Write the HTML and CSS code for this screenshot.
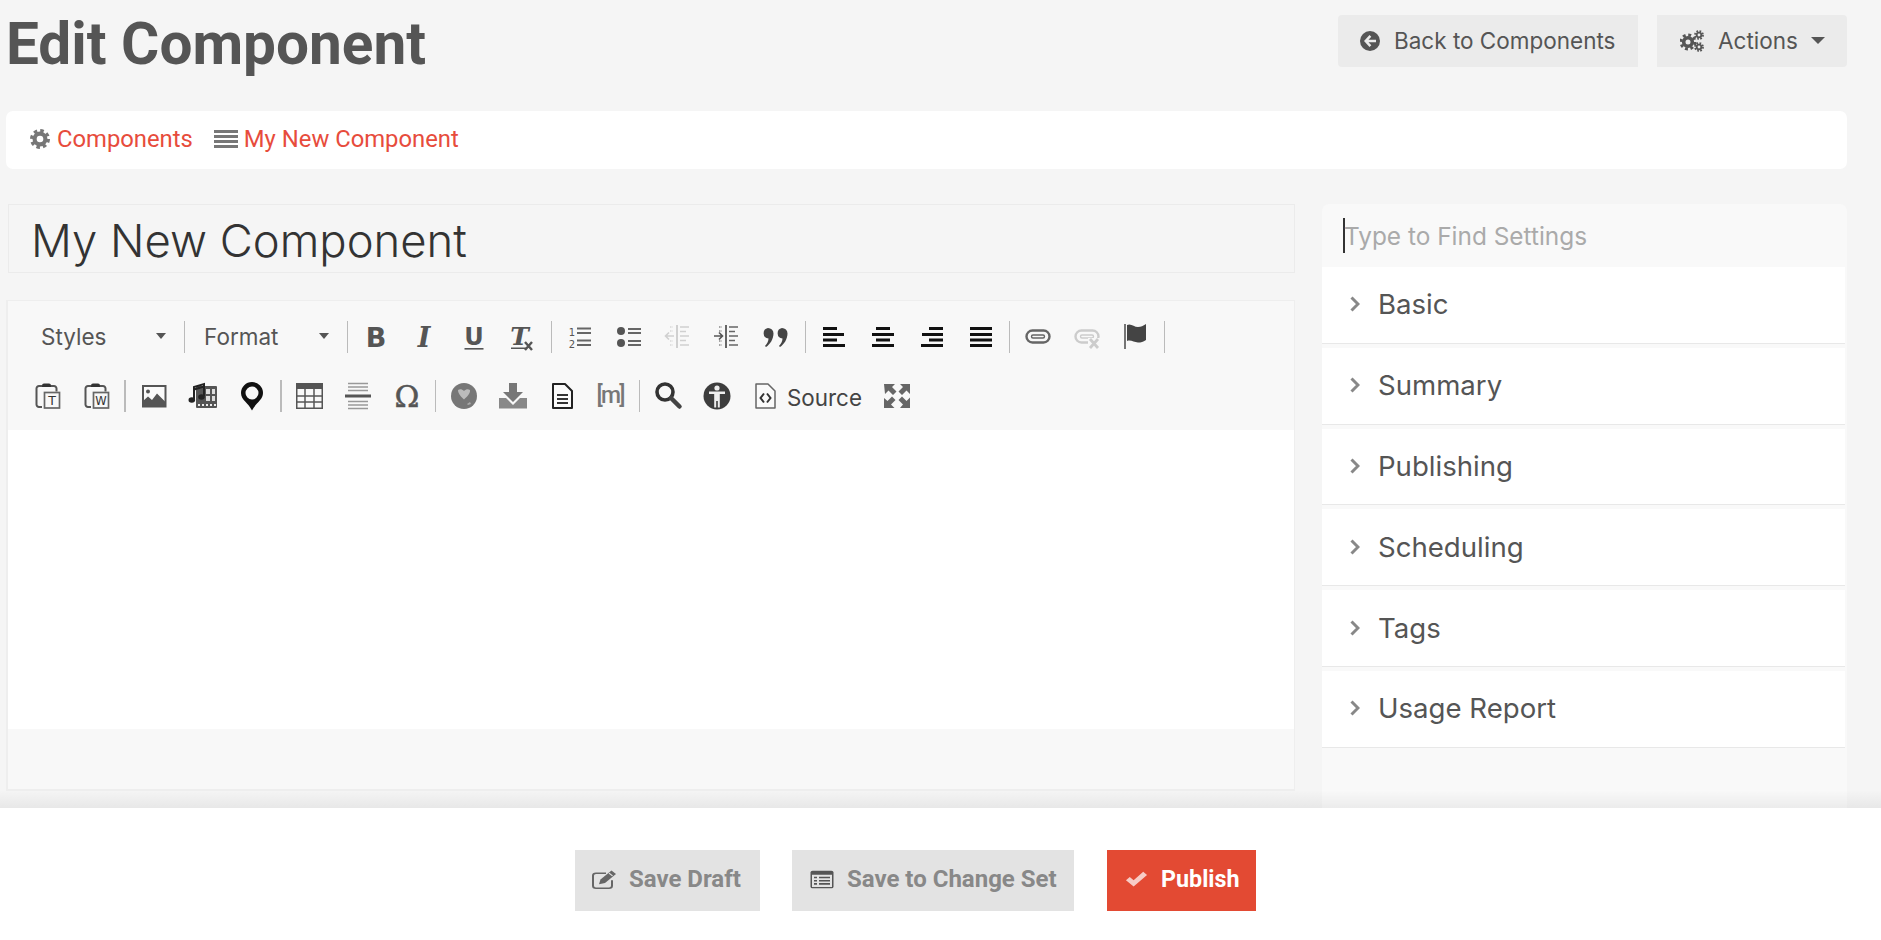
FILE: index.html
```html
<!DOCTYPE html>
<html lang="en">
<head>
<meta charset="utf-8">
<title>Edit Component</title>
<link rel="stylesheet" href="styles.css">
</head>
<body>
<svg class="sprite" xmlns="http://www.w3.org/2000/svg">
  <symbol id="i-gear" viewBox="0 0 24 24"><circle cx="12" cy="12" r="6.5" fill="none" stroke="currentColor" stroke-width="5"/><circle cx="12" cy="12" r="10" fill="none" stroke="currentColor" stroke-width="4" stroke-dasharray="4.2 3.65"/></symbol>
  <symbol id="i-list" viewBox="0 0 24 20"><path d="M0 1h24v3H0zM0 6h24v3H0zM0 11h24v3H0zM0 16h24v3H0z" fill="currentColor"/></symbol>
  <symbol id="i-back" viewBox="0 0 20 20"><circle cx="10" cy="10" r="10" fill="currentColor"/><path d="M9.5 4 4 10l5.500 6 1.800-1.800L8.500 11.300H16V8.700H8.500l2.800-2.900z" fill="#ebebeb"/></symbol>
  <symbol id="i-gears" viewBox="0 0 24 22"><circle cx="8" cy="12" r="4.300" fill="none" stroke="currentColor" stroke-width="3.600"/><circle cx="8" cy="12" r="7" fill="none" stroke="currentColor" stroke-width="3" stroke-dasharray="2.900 2.600"/><circle cx="19" cy="5" r="2.300" fill="none" stroke="currentColor" stroke-width="1.800"/><circle cx="19" cy="5" r="4" fill="none" stroke="currentColor" stroke-width="1.800" stroke-dasharray="1.700 1.450"/><circle cx="19" cy="17" r="2.300" fill="none" stroke="currentColor" stroke-width="1.800"/><circle cx="19" cy="17" r="4" fill="none" stroke="currentColor" stroke-width="1.800" stroke-dasharray="1.700 1.450"/></symbol>
  <symbol id="i-edit" viewBox="0 0 24 24" preserveAspectRatio="none"><path d="M14 4H4a3 3 0 0 0-3 3v13a3 3 0 0 0 3 3h13a3 3 0 0 0 3-3v-7" fill="none" stroke="#666" stroke-width="2"/><path d="M19.500 0.500 24 5 13 16.500 7 18l1.500-6z" fill="#666"/><path d="M17 4l3.500 3.500" stroke="#e3e3e3" stroke-width="1.200"/></symbol>
  <symbol id="i-window" viewBox="0 0 24 24" preserveAspectRatio="none"><rect x="0.500" y="1" width="23" height="22" rx="2" fill="#555"/><rect x="2" y="6" width="20" height="15.500" fill="#e3e3e3"/><path d="M4 8.500h3v2H4zM9 8.500h11v2H9zM4 12.500h3v2H4zM9 12.500h11v2H9zM4 16.500h3v2H4zM9 16.500h11v2H9z" fill="#555"/></symbol>
  <symbol id="i-check" viewBox="0 0 24 20" preserveAspectRatio="none"><path d="M9 19.500 1 11.500l4-4L9 11.500 19 1l4 4z" fill="#fff" fill-opacity=".72"/></symbol>

  <symbol id="t-bold" viewBox="0 0 30 30"><text class="g-sans-b" x="15" y="25" font-size="27" text-anchor="middle" fill="#555">B</text></symbol>
  <symbol id="t-italic" viewBox="0 0 30 30"><text class="g-serif-bi" x="14" y="25" font-size="27" text-anchor="middle" fill="#555">I</text></symbol>
  <symbol id="t-under" viewBox="0 0 30 30"><text class="g-sans-b" x="15" y="23" font-size="24" text-anchor="middle" fill="#555">U</text><rect x="5.500" y="26" width="19" height="1.600" fill="#555"/></symbol>
  <symbol id="t-clear" viewBox="0 0 30 30"><text class="g-serif-bi" x="11.500" y="23" font-size="25" text-anchor="middle" fill="#555">T</text><rect x="3" y="25.500" width="15" height="1.500" fill="#555"/><path d="M17 20l7 8M24 20l-7 8" stroke="#555" stroke-width="2.400"/></symbol>
  <symbol id="t-ol" viewBox="0 0 30 30"><text class="g-sans" x="7" y="14" font-size="10" text-anchor="middle" fill="#555">1</text><text class="g-sans" x="7" y="26" font-size="10" text-anchor="middle" fill="#555">2</text><path d="M12 6.500h14M12 11h14M12 18.500h14M12 23h14" stroke="#666" stroke-width="2"/></symbol>
  <symbol id="t-ul" viewBox="0 0 30 30"><circle cx="7" cy="9" r="4" fill="#555"/><circle cx="7" cy="21" r="4" fill="#555"/><path d="M14 7h13M14 11h13M14 19h13M14 23h13" stroke="#666" stroke-width="2"/></symbol>
  <symbol id="t-out" viewBox="0 0 30 30"><path d="M14 3v23" stroke="#d0d0d0" stroke-width="2"/><path d="M3 14h8M6 10.500 2.500 14 6 17.500" fill="none" stroke="#d0d0d0" stroke-width="1.600"/><path d="M7 5h3M7 9h3M7 19h3M7 23h3" stroke="#d8d8d8" stroke-width="1.500" stroke-dasharray="1.500 1"/><path d="M17 5h9M17 9.500h6M17 14h9M17 18.500h6M17 23h9" stroke="#d0d0d0" stroke-width="1.600"/></symbol>
  <symbol id="t-in" viewBox="0 0 30 30"><path d="M14 3v23" stroke="#666" stroke-width="2"/><path d="M2 14h8M7 10.500 10.500 14 7 17.500" fill="none" stroke="#555" stroke-width="1.600"/><path d="M7 5h3M7 9h3M7 19h3M7 23h3" stroke="#888" stroke-width="1.500" stroke-dasharray="1.500 1"/><path d="M17 5h9M17 9.500h6M17 14h9M17 18.500h6M17 23h9" stroke="#666" stroke-width="1.600"/></symbol>
  <symbol id="t-quote" viewBox="0 0 30 30"><path d="M7 6a5.500 5.500 0 0 1 5.500 5.500C12.500 17 9 22.500 5 25l-1-1c2-2 3.500-5 3.500-7.500A5.300 5.300 0 0 1 7 6zM21 6a5.500 5.500 0 0 1 5.500 5.500c0 5.500-3.500 11-7.500 13.500l-1-1c2-2 3.500-5 3.500-7.500A5.300 5.300 0 0 1 21 6z" fill="#444"/></symbol>
  <symbol id="t-al" viewBox="0 0 30 30"><path d="M4 5h14v3H4zM4 11h21v3H4zM4 16.500h14v3H4zM4 22h22v3H4z" fill="#111"/></symbol>
  <symbol id="t-ac" viewBox="0 0 30 30"><path d="M8 5h14v3H8zM4 11h22v3H4zM8 16.500h14v3H8zM4 22h22v3H4z" fill="#111"/></symbol>
  <symbol id="t-ar" viewBox="0 0 30 30"><path d="M12 5h14v3H12zM5 11h21v3H5zM12 16.500h14v3H12zM4 22h22v3H4z" fill="#111"/></symbol>
  <symbol id="t-aj" viewBox="0 0 30 30"><path d="M4 5h22v3H4zM4 11h22v3H4zM4 16.500h22v3H4zM4 22h22v3H4z" fill="#111"/></symbol>
  <symbol id="t-link" viewBox="0 0 30 30"><rect x="3.500" y="8.500" width="23" height="12" rx="6" fill="none" stroke="#666" stroke-width="2.400"/><rect x="8.500" y="13" width="13" height="3" rx="1.500" fill="none" stroke="#666" stroke-width="1.400"/></symbol>
  <symbol id="t-unlink" viewBox="0 0 30 30"><rect x="3.500" y="8.500" width="23" height="12" rx="6" fill="none" stroke="#ccc" stroke-width="2.400"/><rect x="8.500" y="13" width="13" height="3" rx="1.500" fill="none" stroke="#ccc" stroke-width="1.400"/><rect x="16" y="16" width="12" height="12" fill="#f8f8f8"/><path d="M18 17l8 9M26 17l-8 9" stroke="#ccc" stroke-width="2.800"/></symbol>
  <symbol id="t-flag" viewBox="0 0 30 30"><path d="M4 2v25" stroke="#666" stroke-width="1.800"/><path d="M6 3c4-2 7 2 11 2 3 0 5-1 8-3v16c-3 2-5 2.500-8 2.500-4 0-7-3-11-1.500z" fill="#444"/></symbol>

  <symbol id="t-pt" viewBox="0 0 30 30"><path d="M9 5H6a2.500 2.500 0 0 0-2.500 2.500v16A2.500 2.500 0 0 0 6 26h3M18 5h3a2.500 2.500 0 0 1 2.500 2.500v3" fill="none" stroke="#555" stroke-width="2"/><path d="M9 6h9V4.500a2 2 0 0 0-2-2h-5a2 2 0 0 0-2 2z" fill="#333"/><rect x="11.500" y="11.500" width="15" height="15.500" fill="#f8f8f8" stroke="#666" stroke-width="1.700"/><text class="g-sans" x="19" y="24" font-size="12.500" text-anchor="middle" fill="#333">T</text></symbol>
  <symbol id="t-pw" viewBox="0 0 30 30"><path d="M9 5H6a2.500 2.500 0 0 0-2.500 2.500v16A2.500 2.500 0 0 0 6 26h3M18 5h3a2.500 2.500 0 0 1 2.500 2.500v3" fill="none" stroke="#555" stroke-width="2"/><path d="M9 6h9V4.500a2 2 0 0 0-2-2h-5a2 2 0 0 0-2 2z" fill="#333"/><rect x="11.500" y="11.500" width="15" height="15.500" fill="#f8f8f8" stroke="#666" stroke-width="1.700"/><text class="g-sans" x="19" y="23.500" font-size="11.500" text-anchor="middle" fill="#333">W</text></symbol>
  <symbol id="t-img" viewBox="0 0 30 30"><rect x="4" y="5" width="22.500" height="20.500" fill="#fafafa" stroke="#555" stroke-width="2"/><circle cx="9" cy="10.500" r="2" fill="#555"/><path d="M4 25.500V20l5-4.500 4 3.500 5-6.500 8.500 8.500v4.500z" fill="#555"/></symbol>
  <symbol id="t-media" viewBox="0 0 30 30"><rect x="8" y="5" width="21" height="22" rx="1" fill="#555"/><path d="M18 8h4v5h-4zM24 8h3v5h-3zM24 15h3v5h-3zM18 15h4v5h-4z" fill="#ddd"/><path d="M10 24h2M14 24h2M18 24h2M22 24h2M26 24h2" stroke="#eee" stroke-width="2"/><path d="M6 18V6l10-3v12" fill="none" stroke="#222" stroke-width="2"/><path d="M6 8.500l10-3" stroke="#222" stroke-width="2"/><ellipse cx="3.800" cy="19" rx="3.300" ry="2.800" fill="#222"/><ellipse cx="13.500" cy="16" rx="3.300" ry="2.800" fill="#222"/></symbol>
  <symbol id="t-pin" viewBox="0 0 30 30"><path fill-rule="evenodd" d="M15 1a11 11 0 0 0-11 11c0 7 7.500 10 11 17.500C18.500 22 26 19 26 12A11 11 0 0 0 15 1zm0 4.500a6.500 6.500 0 1 1 0 13 6.500 6.500 0 0 1 0-13z" fill="#111"/></symbol>
  <symbol id="t-table" viewBox="0 0 30 30"><rect x="2" y="2" width="27" height="6" fill="#555"/><rect x="2.750" y="2.750" width="25.500" height="24.500" fill="none" stroke="#555" stroke-width="1.500"/><path d="M2 15h27M2 21h27M11 8v19M20 8v19" stroke="#555" stroke-width="1.500"/></symbol>
  <symbol id="t-hr" viewBox="0 0 30 30"><path d="M5 2.500h20M5 6h20M5 9.500h20M5 20.500h20M5 24h20M5 27.500h20" stroke="#999" stroke-width="1.300"/><rect x="2" y="13.500" width="26" height="3" fill="#555"/></symbol>
  <symbol id="t-omega" viewBox="0 0 30 30"><text class="g-serif" x="15" y="26" font-size="30" text-anchor="middle" fill="#555" stroke="#555" stroke-width=".5">Ω</text></symbol>
  <symbol id="t-globe" viewBox="0 0 30 30"><circle cx="15" cy="15" r="13" fill="#777"/><path d="M9 9c2-1.500 4-1 6 1 2-2 4-2.500 6-1 .5 4-3.500 7-6 9.500-2.500-2.500-6-5.500-6-9.500z" fill="#bbb"/><path d="M18 23l3-2 1 2-3 1z" fill="#aaa"/></symbol>
  <symbol id="t-down" viewBox="0 0 30 30"><path d="M11 2h8v9h6l-10 10L5 11h6z" fill="#777"/><path d="M1 17h7l7 7 7-7h7v10.500H1z" fill="#888"/></symbol>
  <symbol id="t-doc" viewBox="0 0 30 30"><path d="M6 3h12l7 7v17H6z" fill="#fafafa" stroke="#222" stroke-width="2" stroke-linejoin="round"/><path d="M10 14h11M10 18h11M10 22h11" stroke="#333" stroke-width="2"/></symbol>
  <symbol id="t-m" viewBox="0 0 30 30"><text class="g-rob" x="15" y="22" font-size="23" text-anchor="middle" fill="#777" textLength="29">[m]</text></symbol>
  <symbol id="t-search" viewBox="0 0 30 30"><circle cx="12" cy="11" r="8" fill="none" stroke="#333" stroke-width="3.600"/><path d="M18 17l8.500 8.500" stroke="#444" stroke-width="4.500" stroke-linecap="round"/></symbol>
  <symbol id="t-a11y" viewBox="0 0 30 30"><circle cx="15" cy="15" r="13.500" fill="#3d3d3d"/><circle cx="15" cy="7" r="2.600" fill="#eee"/><path d="M7 10.500h16v2.500h-5.200v13.500h-2V20h-1.600v6.500h-2V13H7z" fill="#eee"/></symbol>
  <symbol id="t-src" viewBox="0 0 30 30"><path d="M6 3h12l7 7v17H6z" fill="#fafafa" stroke="#666" stroke-width="1.500" stroke-linejoin="round"/><path d="M14 12.500 10.500 17l3.500 4.500M17 12.500l3.500 4.500-3.500 4.500" fill="none" stroke="#333" stroke-width="2"/></symbol>
  <symbol id="t-full" viewBox="0 0 30 30"><path d="M2 3h11l-3 3 4.500 4.500-3.500 3.500L6.500 9.500 3 13zM28 3v10l-3.500-3.500L20 14l-3.500-3.500L21 6l-3-3zM2 27V17l3.500 3L10 15.500l3.500 3.500L9 23.500l3.500 3.500zM28 27H18l3-3.500-4.500-4.500 3.500-3.500 4.500 4.500 3.500-3.500z" fill="#666"/></symbol>
</svg>

<div class="page">
  <header class="top">
    <h1 class="title">Edit Component</h1>
    <div class="top-actions">
      <a class="btn back"><svg class="ic-20"><use href="#i-back"/></svg><span>Back to Components</span></a>
      <a class="btn actions"><svg class="ic-gears"><use href="#i-gears"/></svg><span>Actions</span><i class="caret caret-lg"></i></a>
    </div>
  </header>

  <nav class="crumbs">
    <svg class="ic-gear"><use href="#i-gear"/></svg><a class="crumb">Components</a>
    <svg class="ic-list"><use href="#i-list"/></svg><a class="crumb">My New Component</a>
  </nav>

  <main class="content">
    <section class="left">
      <div class="name-input">My New Component</div>
      <div class="editor">
        <div class="toolbar">
          <div class="tb-row tb-row1">
            <div class="combo"><span class="combo-label">Styles</span><i class="caret"></i></div>
            <b class="sep"></b>
            <div class="combo"><span class="combo-label">Format</span><i class="caret"></i></div>
            <b class="sep"></b>
            <span class="tb"><svg><use href="#t-bold"/></svg></span>
            <span class="tb"><svg><use href="#t-italic"/></svg></span>
            <span class="tb"><svg><use href="#t-under"/></svg></span>
            <span class="tb"><svg><use href="#t-clear"/></svg></span>
            <b class="sep"></b>
            <span class="tb"><svg><use href="#t-ol"/></svg></span>
            <span class="tb"><svg><use href="#t-ul"/></svg></span>
            <span class="tb"><svg><use href="#t-out"/></svg></span>
            <span class="tb"><svg><use href="#t-in"/></svg></span>
            <span class="tb"><svg><use href="#t-quote"/></svg></span>
            <b class="sep sep-wide"></b>
            <span class="tb"><svg><use href="#t-al"/></svg></span>
            <span class="tb"><svg><use href="#t-ac"/></svg></span>
            <span class="tb"><svg><use href="#t-ar"/></svg></span>
            <span class="tb"><svg><use href="#t-aj"/></svg></span>
            <b class="sep"></b>
            <span class="tb"><svg><use href="#t-link"/></svg></span>
            <span class="tb"><svg><use href="#t-unlink"/></svg></span>
            <span class="tb"><svg><use href="#t-flag"/></svg></span>
            <b class="sep"></b>
          </div>
          <div class="tb-row tb-row2">
            <span class="tb"><svg><use href="#t-pt"/></svg></span>
            <span class="tb"><svg><use href="#t-pw"/></svg></span>
            <b class="sep sep-thick sep-first"></b>
            <span class="tb"><svg><use href="#t-img"/></svg></span>
            <span class="tb"><svg><use href="#t-media"/></svg></span>
            <span class="tb"><svg><use href="#t-pin"/></svg></span>
            <b class="sep sep-thick"></b>
            <span class="tb"><svg><use href="#t-table"/></svg></span>
            <span class="tb"><svg><use href="#t-hr"/></svg></span>
            <span class="tb"><svg><use href="#t-omega"/></svg></span>
            <b class="sep"></b>
            <span class="tb"><svg><use href="#t-globe"/></svg></span>
            <span class="tb"><svg><use href="#t-down"/></svg></span>
            <span class="tb"><svg><use href="#t-doc"/></svg></span>
            <span class="tb"><svg><use href="#t-m"/></svg></span>
            <b class="sep"></b>
            <span class="tb"><svg><use href="#t-search"/></svg></span>
            <span class="tb"><svg><use href="#t-a11y"/></svg></span>
            <span class="tb tb-source"><svg><use href="#t-src"/></svg><span class="source-label">Source</span></span>
            <span class="tb"><svg><use href="#t-full"/></svg></span>
          </div>
        </div>
        <div class="edit-area"></div>
        <div class="edit-foot"></div>
      </div>
    </section>

    <aside class="settings">
      <div class="search"><i class="cursor"></i><span>Type to Find Settings</span></div>
      <div class="rows">
        <div class="row"><svg class="chev" viewBox="0 0 10 16"><path d="M1.500 1.500 8 8l-6.500 6.500" fill="none" stroke="#888" stroke-width="3"/></svg><span>Basic</span></div>
        <div class="row"><svg class="chev" viewBox="0 0 10 16"><path d="M1.500 1.500 8 8l-6.500 6.500" fill="none" stroke="#888" stroke-width="3"/></svg><span>Summary</span></div>
        <div class="row"><svg class="chev" viewBox="0 0 10 16"><path d="M1.500 1.500 8 8l-6.500 6.500" fill="none" stroke="#888" stroke-width="3"/></svg><span>Publishing</span></div>
        <div class="row"><svg class="chev" viewBox="0 0 10 16"><path d="M1.500 1.500 8 8l-6.500 6.500" fill="none" stroke="#888" stroke-width="3"/></svg><span>Scheduling</span></div>
        <div class="row"><svg class="chev" viewBox="0 0 10 16"><path d="M1.500 1.500 8 8l-6.500 6.500" fill="none" stroke="#888" stroke-width="3"/></svg><span>Tags</span></div>
        <div class="row"><svg class="chev" viewBox="0 0 10 16"><path d="M1.500 1.500 8 8l-6.500 6.500" fill="none" stroke="#888" stroke-width="3"/></svg><span>Usage Report</span></div>
      </div>
    </aside>
  </main>

  <footer class="foot">
    <a class="fbtn draft"><svg class="ic-save"><use href="#i-edit"/></svg><span>Save Draft</span></a>
    <a class="fbtn change"><svg class="ic-save"><use href="#i-window"/></svg><span>Save to Change Set</span></a>
    <a class="fbtn publish"><svg class="ic-check"><use href="#i-check"/></svg><span>Publish</span></a>
  </footer>
</div>
</body>
</html>
```
FILE: styles.css
```css
* { box-sizing: border-box; }
html, body { margin: 0; height: 100%; }
body { background: #f5f5f5; color: #555; font-family: Inter, "Liberation Sans", sans-serif; overflow: hidden; }
.sprite { display: none; }
.g-sans { font-family: "DejaVu Sans", sans-serif; }
.g-sans-b { font-family: "DejaVu Sans", sans-serif; font-weight: 700; }
.g-serif { font-family: "DejaVu Serif", serif; }
.g-serif-bi { font-family: "DejaVu Serif", serif; font-weight: 700; font-style: italic; }
.g-rob { font-family: Roboto, sans-serif; font-weight: 500; }

.page { height: 940px; display: flex; flex-direction: column; }

.top { height: 111px; display: flex; justify-content: space-between; align-items: flex-start; padding: 0 34px 0 6px; flex: none; }
.title { margin: 0; font-family: Roboto, sans-serif; font-weight: 700; font-size: 58.500px; line-height: 89px; color: #555; }
.top-actions { display: flex; gap: 19px; margin-top: 15px; }
.btn { height: 52px; padding-bottom: 1px; background: #ebebeb; display: flex; align-items: center; font-size: 22.500px; color: #555; }
.back { width: 300px; padding-left: 22px; gap: 14px; border-radius: 4px 0 0 4px; }
.actions { width: 190px; padding-left: 23px; gap: 14px; border-radius: 0 4px 4px 0; }
.ic-20 { width: 20px; height: 20px; color: #555; }
.ic-gears { width: 24px; height: 22px; color: #555; }
.caret { display: block; width: 0; height: 0; border-left: 5.500px solid transparent; border-right: 5.500px solid transparent; border-top: 6px solid #555; }
.caret-lg { margin-left: -1px; border-left-width: 7px; border-right-width: 7px; border-top-width: 7px; }

.crumbs { height: 58px; margin: 0 34px 35px 6px; padding: 0 0 2px 24px; background: #fff; border-radius: 7px; display: flex; align-items: center; flex: none; font-family: Roboto, sans-serif; font-size: 23.800px; }
.crumb { color: #e74c3c; }
.ic-gear { width: 20px; height: 20px; color: #777; margin-right: 7px; }
.ic-list { width: 24px; height: 20px; color: #777; margin: 0 6px 0 21px; }

.content { flex: 1; min-height: 0; display: grid; grid-template-columns: 1289px 525px; column-gap: 27px; padding-left: 6px; }
.left { display: flex; flex-direction: column; gap: 27px; }
.name-input { height: 69px; margin-left: 2px; border: 1px solid #ebebeb; padding: 4px 0 0 22px; font-size: 45.400px; font-weight: 300; line-height: 63px; color: #333; }
.editor { height: 491px; border: 2px solid #eeeeee; border-width: 1px 1px 2px 2px; background: #f8f8f8; display: flex; flex-direction: column; }
.toolbar { height: 129px; padding-top: 7px; flex: none; }
.tb-row { height: 58px; display: flex; align-items: center; }
.tb-row1 { padding-left: 17px; }
.tb-row2 { padding-left: 15px; margin-top: 1px; }
.combo { width: 155px; height: 40px; padding: 0 14px 2px 16px; display: flex; align-items: center; justify-content: space-between; font-size: 22.500px; color: #555; }
.tb { width: 49px; height: 40px; display: flex; align-items: center; justify-content: center; flex: none; }
.tb svg { width: 30px; height: 30px; display: block; flex: none; }
.tb-source { width: 131px; gap: 7px; justify-content: flex-start; padding-left: 9px; font-size: 22.400px; color: #444; }
.source-label { padding-top: 3px; }
.sep { width: 1px; height: 32px; margin: 0 3px 0 4px; background: #bbb; flex: none; }
.sep-thick { width: 2px; margin-right: 2px; }
.sep-first { margin-left: 3px; margin-right: 3px; }
.sep-wide { margin: 0 3px 0 5px; }
.edit-area { height: 299px; background: #fff; flex: none; }
.edit-foot { flex: 1; }

.settings { background: #f9f9f9; border-radius: 7px 7px 0 0; }
.search { height: 63px; display: flex; align-items: center; padding-left: 21px; font-size: 24.400px; color: #aaa; }
.search span { margin-left: -1px; }
.cursor { width: 2px; height: 35px; background: #333; flex: none; }
.rows { display: flex; flex-direction: column; gap: 4px; padding-right: 2px; }
.row { height: 76.800px; padding: 0 0 1px 28px; background: #fff; border-bottom: 1px solid #e8e8e8; display: flex; align-items: center; font-size: 27.600px; color: #555; gap: 18px; }
.chev { width: 10px; height: 16px; flex: none; }

.foot { position: relative; height: 132px; flex: none; background: #fff; display: flex; justify-content: center; padding: 42px 50px 0 0; gap: 32px; }
.foot::before { content: ""; position: absolute; left: 0; right: 0; bottom: 100%; height: 18px; background: linear-gradient(rgba(0,0,0,0), rgba(0,0,0,.055)); }
.fbtn { height: 61px; padding-bottom: 3px; display: flex; align-items: center; font-family: Roboto, sans-serif; font-weight: 700; font-size: 24px; gap: 13px; color: #888; background: #e3e3e3; }
.draft { width: 185px; padding-left: 17px; }
.change { width: 282px; padding-left: 18px; }
.publish { width: 149px; margin-left: 1px; padding-left: 18px; color: #fff; background: #e34a33; gap: 13px; font-size: 23.300px; }
.ic-save { width: 24px; height: 19px; }
.ic-check { width: 23px; height: 16px; }
```
